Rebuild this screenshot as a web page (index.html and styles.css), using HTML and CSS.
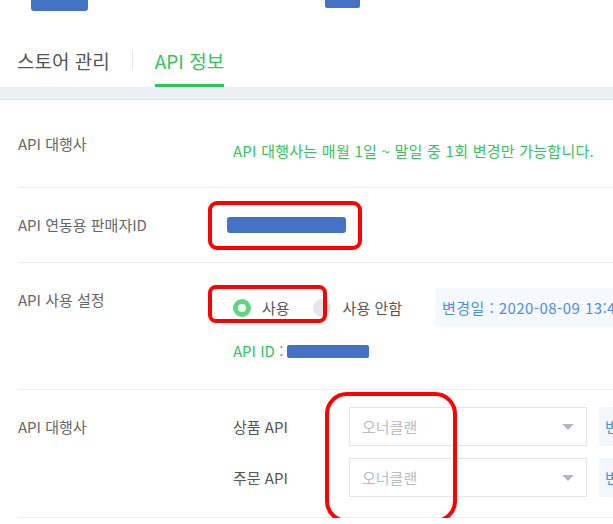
FILE: index.html
```html
<!DOCTYPE html>
<html lang="ko">
<head>
<meta charset="utf-8">
<title>API 정보</title>
<link rel="stylesheet" href="styles.css">
</head>
<body>
<div class="page">
  <div class="topbar">
    <span class="redact r1"></span>
    <span class="redact r2"></span>
  </div>
  <nav class="tabs">
    <a class="tab">스토어 관리</a>
    <span class="tab-sep"></span>
    <a class="tab active">API 정보</a>
  </nav>
  <div class="band"></div>
  <div class="rows">
    <section class="row row1">
      <div class="label">API 대행사</div>
      <div class="value notice">API 대행사는 매월 1일 ~ 말일 중 1회 변경만 가능합니다.</div>
    </section>
    <section class="row row2">
      <div class="label">API 연동용 판매자ID</div>
      <div class="value id-value"><span class="redact id-bar"></span></div>
      <span class="mark mark2"></span>
    </section>
    <section class="row row3">
      <div class="label">API 사용 설정</div>
      <div class="value">
        <div class="radio-line">
          <span class="radio on"></span><span class="radio-text">사용</span>
          <span class="radio off"></span><span class="radio-text">사용 안함</span>
          <span class="date-box">변경일 : 2020-08-09 13:45:12</span>
        </div>
        <div class="apiid"><span class="apiid-text">API ID :</span><span class="redact apiid-bar"></span></div>
      </div>
      <span class="mark mark3"></span>
    </section>
    <section class="row row4">
      <div class="label">API 대행사</div>
      <div class="value">
        <div class="api-line">
          <span class="api-name">상품 API</span>
          <div class="select"><span>오너클랜</span><i class="caret"></i></div>
          <span class="btn">변경</span>
        </div>
        <div class="api-line">
          <span class="api-name">주문 API</span>
          <div class="select"><span>오너클랜</span><i class="caret"></i></div>
          <span class="btn">변경</span>
        </div>
      </div>
      <span class="mark mark4"></span>
    </section>
  </div>
</div>
</body>
</html>
```
FILE: styles.css
```css
html, body {
  margin: 0;
  padding: 0;
  overflow: hidden;
}
body {
  width: 613px;
  height: 524px;
  background: #fff;
  font-family: "Noto Sans CJK KR", "Noto Sans", sans-serif;
  color: #555;
}
.page {
  width: 613px;
  overflow: hidden;
}
.topbar {
  height: 11px;
  display: flex;
  align-items: flex-start;
  padding-left: 31px;
}
.redact {
  display: block;
  background: #4472c4;
}
.r1 {
  width: 57px;
  height: 11px;
  border-radius: 0 0 3px 3px;
}
.r2 {
  width: 35px;
  height: 8px;
  margin-left: 237px;
  border-radius: 0 0 2px 2px;
}
.tabs {
  display: flex;
  align-items: flex-start;
  padding-left: 17px;
}
.tab {
  font-size: 19px;
  line-height: 24px;
  padding-top: 38px;
  padding-bottom: 11px;
  border-bottom: 3px solid transparent;
  color: #555;
}
.tab.active {
  color: #33c45c;
  border-bottom-color: #2dc55a;
}
.tab-sep {
  width: 1px;
  height: 20px;
  background: #e4e6e9;
  margin: 39px 22px 0;
}
.band {
  height: 12px;
  background: #eceff3;
  border-bottom: 1px solid #dfe3e8;
}
.rows {
  margin-left: 18px;
}
.row {
  position: relative;
  display: flex;
  align-items: flex-start;
  border-bottom: 1px solid #e9edf2;
}
.label {
  width: 215px;
  flex: none;
  font-size: 15px;
  line-height: 22px;
  color: #666;
}
.value {
  flex: 1;
  min-width: 0;
  font-size: 15px;
  line-height: 22px;
}
.notice {
  color: #33c45c;
  white-space: nowrap;
  letter-spacing: 0.25px;
}
.row1 {
  padding: 33px 0 25px;
}
.row1 .notice {
  margin-top: 7px;
}
.row2 {
  padding: 26px 0;
}
.id-value {
  display: flex;
  align-items: center;
  height: 22px;
}
.id-bar {
  width: 119px;
  height: 16px;
  margin-left: -6px;
  border-radius: 3px;
}
.row3 {
  padding: 25px 0 27px;
}
.row3 .label {
  margin-top: 1px;
}
.radio-line {
  display: flex;
  align-items: center;
  height: 39px;
  white-space: nowrap;
}
.radio {
  width: 18px;
  height: 18px;
  border-radius: 50%;
  box-sizing: border-box;
  flex: none;
}
.radio.on {
  border: 5px solid #5ed67d;
  background: #fff;
}
.radio.off {
  background: #e4e6ea;
  margin-left: 23px;
}
.radio-text {
  margin-left: 11px;
  color: #555;
}
.radio.off + .radio-text {
  margin-left: 12px;
}
.date-box {
  margin-left: 33px;
  height: 39px;
  line-height: 39px;
  padding: 0 7px;
  background: #f5f8fd;
  color: #4a8fe7;
  letter-spacing: 0.45px;
  flex: none;
}
.apiid {
  display: flex;
  align-items: center;
  margin-top: 13px;
  height: 22px;
}
.apiid-text {
  color: #33c45c;
}
.apiid-bar {
  width: 82px;
  height: 13px;
  margin-left: 4px;
  border-radius: 2px;
}
.row4 {
  padding: 17px 0 20px;
}
.row4 .label {
  margin-top: 9px;
}
.api-line {
  display: flex;
  align-items: center;
  height: 39px;
  white-space: nowrap;
}
.api-line + .api-line {
  margin-top: 12px;
}
.api-name {
  width: 116px;
  flex: none;
  color: #555;
}
.select {
  width: 238px;
  height: 39px;
  flex: none;
  box-sizing: border-box;
  border: 1px solid #e4e6ea;
  display: flex;
  align-items: center;
  justify-content: space-between;
  padding: 0 12px 0 12px;
  color: #b8bcc2;
}
.caret {
  width: 0;
  height: 0;
  border-left: 6px solid transparent;
  border-right: 6px solid transparent;
  border-top: 6px solid #b3b7bd;
}
.btn {
  margin-left: 12px;
  height: 39px;
  line-height: 39px;
  padding: 0 6px;
  background: #f3f6fc;
  color: #4a8fe7;
  flex: none;
}
.mark {
  position: absolute;
  box-sizing: border-box;
  border: 4px solid #ff0000;
  pointer-events: none;
}
.mark2 {
  left: 190px;
  top: 13px;
  width: 154px;
  height: 49px;
  border-radius: 9px;
}
.mark3 {
  left: 190px;
  top: 22px;
  width: 119px;
  height: 38px;
  border-radius: 8px;
}
.mark4 {
  left: 307px;
  top: 2px;
  width: 132px;
  height: 131px;
  border-radius: 22px;
}
```
